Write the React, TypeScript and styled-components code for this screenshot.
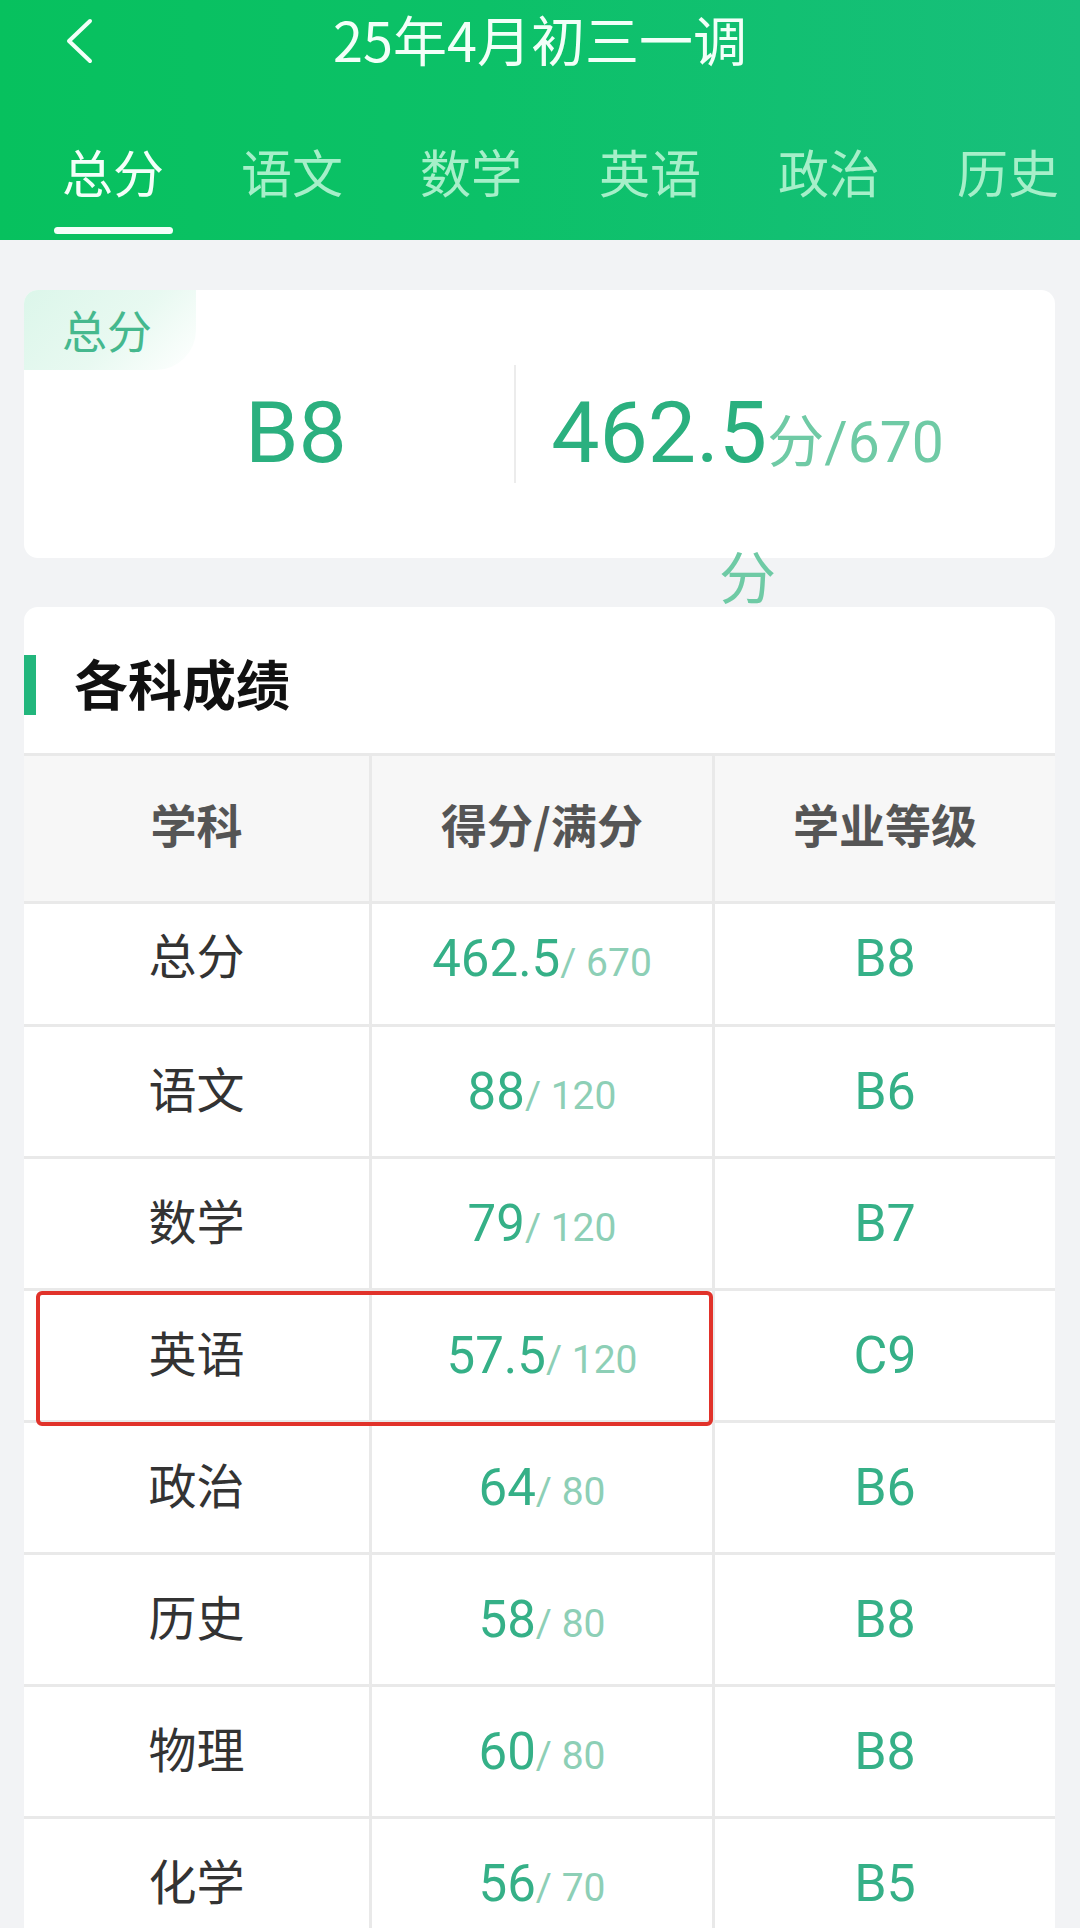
import React from "react";
import styled, { createGlobalStyle } from "styled-components";

const GlobalStyle = createGlobalStyle`
  html, body {
    margin: 0;
    padding: 0;
    background: #f2f3f5;
    overflow: hidden;
  }
  body {
    font-family: Roboto, "Noto Sans CJK SC", sans-serif;
  }
  * { box-sizing: border-box; }
`;

const Page = styled.div`
  width: 1080px;
  height: 1928px;
  overflow: hidden;
  background: #f2f3f5;
`;

const Header = styled.header`
  height: 240px;
  background: linear-gradient(90deg, #07c15e 0%, #0cc168 45%, #18bf7c 100%);
  display: flex;
  flex-direction: column;
`;

const TopBar = styled.div`
  height: 78px;
  display: grid;
  grid-template-columns: 1fr auto 1fr;
  align-items: center;
`;

const BackButton = styled.button`
  justify-self: start;
  margin-left: 63px;
  margin-top: 3px;
  width: 32px;
  height: 46px;
  padding: 0;
  border: 0;
  background: none;
  display: flex;
  align-items: center;
  justify-content: center;
`;

const Title = styled.h1`
  margin: 0;
  font: 400 54px/78px "Noto Sans CJK SC", sans-serif;
  color: #f2fff8;
  white-space: nowrap;
`;

const Tabs = styled.nav`
  display: flex;
  gap: 77px;
  padding: 43px 0 0 62px;
`;

const Tab = styled.span<{ $active?: boolean }>`
  position: relative;
  font: 400 51px/100px "Noto Sans CJK SC", sans-serif;
  color: ${(p) => (p.$active ? "#f3fff9" : "#a6efc9")};
  white-space: nowrap;
  &::after {
    content: "";
    display: ${(p) => (p.$active ? "block" : "none")};
    position: absolute;
    left: 50%;
    bottom: -13px;
    width: 119px;
    height: 7px;
    margin-left: -59px;
    border-radius: 4px;
    background: #f3fff9;
  }
`;

const Main = styled.main`
  padding: 50px 25px 0 24px;
  display: flex;
  flex-direction: column;
  gap: 49px;
`;

const SummaryCard = styled.section`
  position: relative;
  height: 268px;
  padding-top: 75px;
  background: #fff;
  border-radius: 14px;
`;

const CardTag = styled.div`
  position: absolute;
  left: 0;
  top: 0;
  width: 172px;
  height: 80px;
  padding-left: 38px;
  border-radius: 14px 0 40px 0;
  background: linear-gradient(135deg, #dcf6ea 0%, #e8f9f1 55%, rgba(255, 255, 255, 0) 100%);
  font: 400 45px/80px "Noto Sans CJK SC", sans-serif;
  color: #45b88e;
`;

const SummaryRow = styled.div`
  display: flex;
  align-items: flex-start;
`;

const SummaryGrade = styled.div`
  flex: none;
  width: 490px;
  padding: 9px 0 0 54px;
  text-align: center;
  font: 400 86px/118px Roboto, sans-serif;
  color: #2bb07f;
`;

const Divider = styled.div`
  flex: none;
  width: 2px;
  height: 118px;
  background: #ececec;
`;

const SummaryScore = styled.div`
  flex: none;
  width: 425px;
  margin-left: 19px;
  padding-top: 4px;
  text-align: center;
  font: 400 86px/127px Roboto, "Noto Sans CJK SC", sans-serif;
  color: #2bb07f;
`;

const SummaryFull = styled.span`
  font-size: 57px;
  color: #6fcaa5;
`;

const TableCard = styled.section`
  background: #fff;
  border-radius: 14px 14px 0 0;
  overflow: hidden;
`;

const SectionHeader = styled.div`
  display: flex;
  align-items: center;
  gap: 38px;
  height: 60px;
  margin: 48px 0 38px;
`;

const AccentBar = styled.span`
  width: 12px;
  height: 60px;
  background: #22b67c;
`;

const SectionTitle = styled.h2`
  margin: 0 0 4px;
  font: 700 54px/60px "Noto Sans CJK SC", sans-serif;
  color: #111;
`;

const ScoreGrid = styled.div`
  position: relative;
  display: grid;
  grid-template-columns: 345px 340px 1fr;
  grid-template-rows: 145px 120px repeat(7, 129px);
  gap: 3px;
  background: #e9e9e9;
  border-top: 3px solid #e9e9e9;
`;

const HeadCell = styled.div`
  display: flex;
  align-items: center;
  justify-content: center;
  padding-bottom: 11px;
  background: #f7f7f7;
  font: 700 46px "Noto Sans CJK SC", sans-serif;
  color: #555;
`;

const Cell = styled.div<{ $lift?: number }>`
  display: flex;
  align-items: center;
  justify-content: center;
  padding-bottom: ${(p) => p.$lift ?? 0}px;
  background: #fff;
`;

const Subject = styled.span`
  font: 400 48px "Noto Sans CJK SC", sans-serif;
  color: #333;
`;

const Score = styled.span`
  font: 400 51px Roboto, sans-serif;
  color: #35b087;
  white-space: pre;
`;

const Full = styled.span`
  font-size: 39px;
  color: #8dcfb6;
`;

const Grade = styled.span`
  font: 400 52px Roboto, sans-serif;
  color: #35b087;
`;

const Highlight = styled.div`
  position: absolute;
  grid-column: 1 / 3;
  grid-row: 5 / 6;
  left: 12px;
  right: -1px;
  top: 0;
  bottom: -6px;
  border: 4px solid #e1322a;
  border-radius: 6px;
  pointer-events: none;
`;

const tabs = ["总分", "语文", "数学", "英语", "政治", "历史"];

const rows = [
  { subject: "总分", score: "462.5", full: "670", grade: "B8" },
  { subject: "语文", score: "88", full: "120", grade: "B6" },
  { subject: "数学", score: "79", full: "120", grade: "B7" },
  { subject: "英语", score: "57.5", full: "120", grade: "C9" },
  { subject: "政治", score: "64", full: "80", grade: "B6" },
  { subject: "历史", score: "58", full: "80", grade: "B8" },
  { subject: "物理", score: "60", full: "80", grade: "B8" },
  { subject: "化学", score: "56", full: "70", grade: "B5" },
];

export default function App() {
  return (
    <Page>
      <GlobalStyle />
      <Header>
        <TopBar>
          <BackButton aria-label="返回">
            <svg width="32" height="46" viewBox="0 0 32 46" fill="none">
              <polyline
                points="27,3 6,23 27,43"
                stroke="#f2fff8"
                strokeWidth="4"
                strokeLinecap="round"
                strokeLinejoin="round"
              />
            </svg>
          </BackButton>
          <Title>25年4月初三一调</Title>
          <span />
        </TopBar>
        <Tabs>
          {tabs.map((t, i) => (
            <Tab key={t} $active={i === 0}>
              {t}
            </Tab>
          ))}
        </Tabs>
      </Header>
      <Main>
        <SummaryCard>
          <CardTag>总分</CardTag>
          <SummaryRow>
            <SummaryGrade>B8</SummaryGrade>
            <Divider />
            <SummaryScore>
              462.5<SummaryFull>分/670</SummaryFull>
              <SummaryFull>分</SummaryFull>
            </SummaryScore>
          </SummaryRow>
        </SummaryCard>
        <TableCard>
          <SectionHeader>
            <AccentBar />
            <SectionTitle>各科成绩</SectionTitle>
          </SectionHeader>
          <ScoreGrid>
            <HeadCell>学科</HeadCell>
            <HeadCell>得分/满分</HeadCell>
            <HeadCell>学业等级</HeadCell>
            {rows.map((r, i) => {
              const lift = i === 0 ? 12 : 0;
              return (
                <React.Fragment key={r.subject}>
                  <Cell $lift={lift + 10}>
                    <Subject>{r.subject}</Subject>
                  </Cell>
                  <Cell $lift={lift}>
                    <Score>
                      {r.score}
                      <Full>/ {r.full}</Full>
                    </Score>
                  </Cell>
                  <Cell $lift={lift}>
                    <Grade>{r.grade}</Grade>
                  </Cell>
                </React.Fragment>
              );
            })}
            <Highlight />
          </ScoreGrid>
        </TableCard>
      </Main>
    </Page>
  );
}
